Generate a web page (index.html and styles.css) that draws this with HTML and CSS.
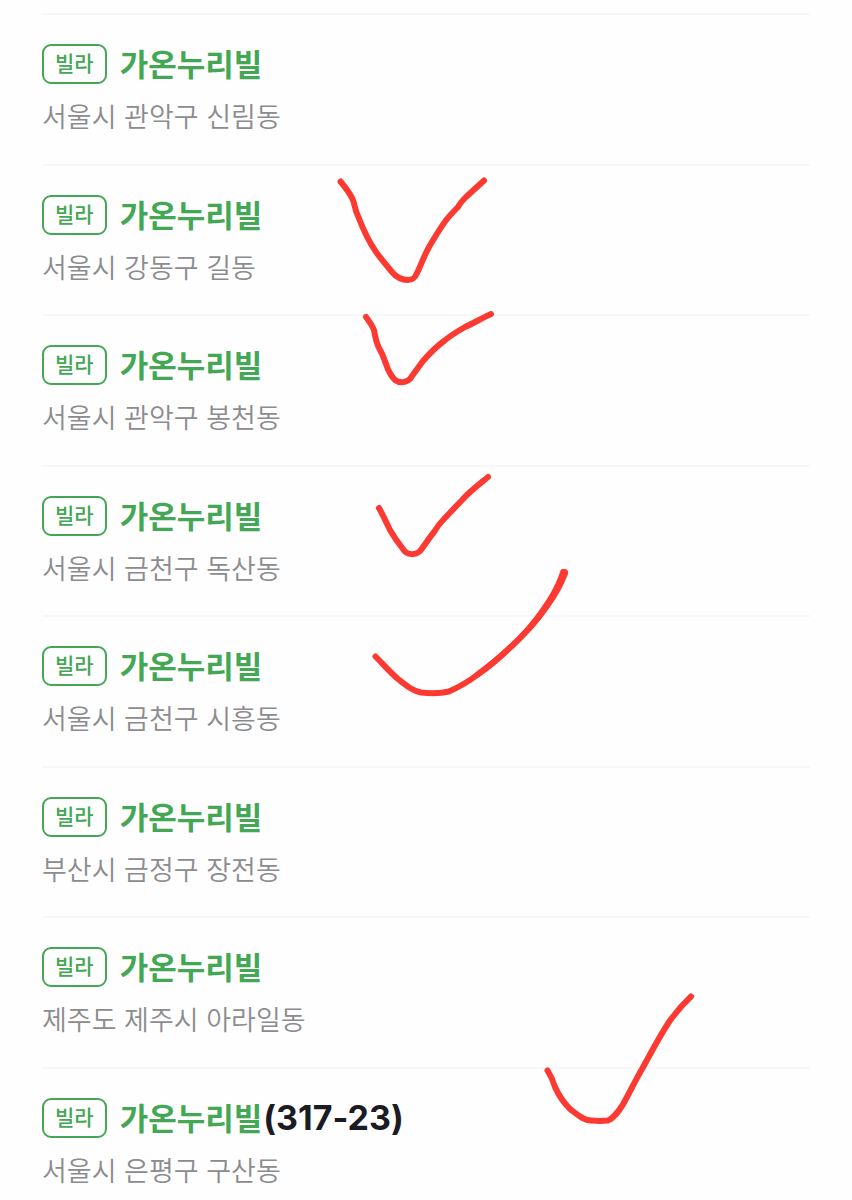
FILE: index.html
```
<!DOCTYPE html>
<html lang="ko">
<head>
	<meta charset="UTF-8">
	<meta name="viewport" content="width=device-width, initial-scale=1">
	<title>가온누리빌</title>
	<link rel="stylesheet" href="styles.css">
</head>
<body>
	<div class="main">
		<ul class="list">
			<li class="item">
				<div class="title"><span class="badge">빌라</span><span class="name"><em>가온누리빌</em></span></div>
				<div class="address">서울시 관악구 신림동</div>
			</li>
			<li class="item">
				<div class="title"><span class="badge">빌라</span><span class="name"><em>가온누리빌</em></span></div>
				<div class="address">서울시 강동구 길동</div>
			</li>
			<li class="item">
				<div class="title"><span class="badge">빌라</span><span class="name"><em>가온누리빌</em></span></div>
				<div class="address">서울시 관악구 봉천동</div>
			</li>
			<li class="item">
				<div class="title"><span class="badge">빌라</span><span class="name"><em>가온누리빌</em></span></div>
				<div class="address">서울시 금천구 독산동</div>
			</li>
			<li class="item">
				<div class="title"><span class="badge">빌라</span><span class="name"><em>가온누리빌</em></span></div>
				<div class="address">서울시 금천구 시흥동</div>
			</li>
			<li class="item">
				<div class="title"><span class="badge">빌라</span><span class="name"><em>가온누리빌</em></span></div>
				<div class="address">부산시 금정구 장전동</div>
			</li>
			<li class="item">
				<div class="title"><span class="badge">빌라</span><span class="name"><em>가온누리빌</em></span></div>
				<div class="address">제주도 제주시 아라일동</div>
			</li>
			<li class="item">
				<div class="title"><span class="badge">빌라</span><span class="name"><em>가온누리빌</em>(317-23)</span></div>
				<div class="address">서울시 은평구 구산동</div>
			</li>
		</ul>
		<!-- 빨간 펜 체크 표시 -->
		<svg class="marks" width="852" height="1200" viewBox="0 0 852 1200" aria-hidden="true">
			<path d="M340.500 181.500 C345 187 350 193 353 200 C355 206 355 210 358 216 C363 229 369 242 376 252 C382 260 387 266 392 272 C397 278 402 280 408 280 C413 280 415 278 417 273 C421 265 424 256 429 247 C435 237 440 228 447 219 C451 214 454 211 458 207 C460 203 463 200 466 197 L484 180.500"/>
			<path d="M366 317 C369 321 372 325 374 330 C375 336 376 342 379 348 C382 353 384 358 386 364 C388 370 391 376 395 380 C399 383 406 383 410 379 C414 373 418 368 423 361 C430 353 436 347 444 341 C450 336 458 331 465 327 C474 323 482 318 491 314"/>
			<path d="M379 508 C383 515 386 522 390 530 C394 537 399 544 403 549 C407 556 416 555 420 551 C425 545 429 538 434 532 C437 527 440 523 444 519 L463 499 C469 492 477 486 488 477"/>
			<path d="M375.500 656.500 C382 663 390 672 398 679 C407 686 413 691 421 692.500 C430 693.500 441 693.500 449 691.500 C459 687 468 682 477 675 C491 665 506 652 520 638 C531 627 544 611 553 596 C557 589 560 584 564 573"/>
			<!-- 끝으로 갈수록 굵어지는 획 -->
			<path class="taper" d="M475 673 C490 662 504 650 518 636 C529 625 541 609 550 594 C554 587 557 581 560 572 A4 4 0 0 1 568 574 C564 584 561 590 556 598 C547 612 534 629 522 640 C508 654 494 667 479 677 Z"/>
			<path d="M547.500 1070.500 C551 1076 553 1080 555 1087 C559 1096 564 1103 570 1109 C577 1114 582 1120 591 1120.500 C597 1121 603 1121 608 1120.500 C614 1118 618 1112 622 1106 C629 1094 635 1081 642 1069 C651 1053 659 1037 669 1022 C676 1012 683 1004 691 996.500"/>
		</svg>
	</div>
</body>
</html>
```
FILE: styles.css
```
body{
	margin: 0;
	background-color: #fefefe;
	font-family: Inter, "Noto Sans CJK KR", sans-serif;
}
.main{
	position: relative;
	padding: 13px 42px 0;
	overflow: hidden;
}
.list{
	padding: 0;
	margin: 0;
	list-style: none;
}
.item{
	padding: 29px 0 27px;
	border-top: 2px solid #f8f8f9;
}
.item:nth-child(even){
	padding-bottom: 26px;
}
.item:last-child{
	padding-bottom: 0;
}
.title{
	display: flex;
	align-items: center;
	gap: 13px;
	height: 41px;
}
.badge{
	box-sizing: border-box;
	padding: 0 11px;
	margin-bottom: 2px;
	border: 2px solid #43a755;
	border-radius: 9px;
	font-size: 21px;
	font-weight: 500;
	line-height: 36px;
	color: #43a755;
}
.name{
	font-size: 34px;
	font-weight: 700;
	line-height: 40px;
	color: #1b1b24;
}
.name em{
	margin-right: 1px;
	font-size: 31px;
	font-style: normal;
	color: #43a755;
}
.address{
	margin-top: 14px;
	font-size: 27px;
	font-weight: 350;
	line-height: 38px;
	color: #8c8c8f;
}
.marks{
	position: absolute;
	top: 0;
	left: 0;
	pointer-events: none;
}
.marks path{
	fill: none;
	stroke: #fc3a32;
	stroke-width: 6;
	stroke-linecap: round;
	stroke-linejoin: round;
}
.marks .taper{
	fill: #fc3a32;
	stroke: none;
}
```
